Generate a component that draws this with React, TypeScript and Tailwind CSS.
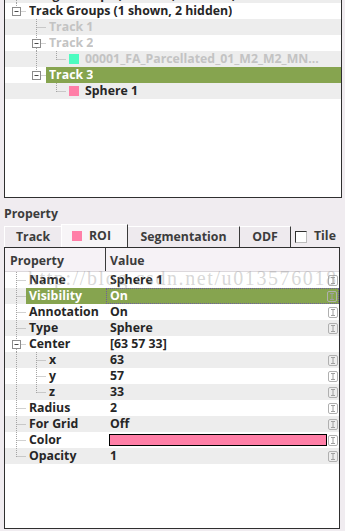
import React from 'react'

type TreeRow = {
  level: number
  text: string
  box?: boolean
  last?: boolean
  cont?: boolean[]
  tone: 'dark' | 'dim' | 'sel'
  swatch?: string
}

type PropRow = {
  name: string
  value?: string
  level?: number
  box?: boolean
  last?: boolean
  cont?: boolean[]
  sel?: boolean
  icon?: boolean
  color?: string
}

const treeRows: TreeRow[] = [
  { level: 0, text: 'Image Groups (0 shown, 0 hidden)', box: true, tone: 'dark' },
  { level: 0, text: 'Track Groups (1 shown, 2 hidden)', box: true, last: true, tone: 'dark' },
  { level: 1, text: 'Track 1', cont: [false], tone: 'dim' },
  { level: 1, text: 'Track 2', box: true, cont: [false], tone: 'dim' },
  { level: 2, text: '00001_FA_Parcellated_01_M2_M2_MN...', last: true, cont: [false, true], tone: 'dim', swatch: '#4dfcc0' },
  { level: 1, text: 'Track 3', box: true, last: true, cont: [false], tone: 'sel' },
  { level: 2, text: 'Sphere 1', last: true, cont: [false, false], tone: 'dark', swatch: '#ff7fa7' },
]

const propRows: PropRow[] = [
  { name: 'Name', value: 'Sphere 1', icon: true },
  { name: 'Visibility', value: 'On', sel: true, icon: true },
  { name: 'Annotation', value: 'On', icon: true },
  { name: 'Type', value: 'Sphere', icon: true },
  { name: 'Center', value: '[63 57 33]', box: true },
  { name: 'x', value: '63', level: 1, cont: [true], icon: true },
  { name: 'y', value: '57', level: 1, cont: [true], icon: true },
  { name: 'z', value: '33', level: 1, cont: [true], last: true, icon: true },
  { name: 'Radius', value: '2', icon: true },
  { name: 'For Grid', value: 'Off', icon: true },
  { name: 'Color', color: '#ff7fa7', icon: true },
  { name: 'Opacity', value: '1', last: true, icon: true },
]

// dotted branch lines + expander box, 16px high
function Gutter({ level, box, last, cont = [] }: { level: number; box?: boolean; last?: boolean; cont?: boolean[] }) {
  const w = 21 + 20 * level
  const bx = 11.5 + 20 * level
  const dot = { stroke: '#a3a3a3', strokeDasharray: '1 1' }
  return (
    <svg width={w} height={16} className="shrink-0">
      {cont.map((c, i) =>
        c ? <line key={i} x1={11.5 + 20 * i} y1={0} x2={11.5 + 20 * i} y2={16} {...dot} /> : null
      )}
      {box ? (
        <>
          <line x1={bx} y1={0} x2={bx} y2={4} {...dot} />
          {!last && <line x1={bx} y1={13} x2={bx} y2={16} {...dot} />}
          <line x1={bx + 5} y1={8.5} x2={w} y2={8.5} {...dot} />
          <rect x={bx - 4} y={4.5} width={8} height={8} fill="#fff" stroke="#8c8c8c" />
          <line x1={bx - 2} y1={8.5} x2={bx + 2} y2={8.5} stroke="#4a4a4a" />
        </>
      ) : (
        <>
          <line x1={bx} y1={0} x2={bx} y2={last ? 9 : 16} {...dot} />
          <line x1={bx + 1} y1={8.5} x2={w} y2={8.5} {...dot} />
        </>
      )}
    </svg>
  )
}

function EditIcon() {
  return (
    <svg width="10" height="11" viewBox="0 0 10 11" className="shrink-0">
      <rect x="0.5" y="0.5" width="9" height="10" rx="1.5" fill="none" stroke="#b0b0b0" />
      <path d="M3 2.5h4M5 2.5v6M3 8.5h4" stroke="#a0a0a0" fill="none" />
    </svg>
  )
}

export default function App() {
  return (
    <div className="relative h-[531px] w-[345px] overflow-hidden bg-[#f0ecf0] font-['Open_Sans',sans-serif] text-[12.3px] font-bold">
      {/* track tree */}
      <div className="ml-[4px] h-[198px] w-[338px] overflow-hidden border-x border-b border-[#2f2f2f] bg-white">
        {treeRows.map((r, i) => (
          <div
            key={i}
            className={`flex h-4 leading-4 ${i % 2 === 0 ? 'bg-[#ededed]' : 'bg-white'} ${i === 0 ? 'mt-[-13px]' : ''}`}
          >
            <Gutter level={r.level} box={r.box} last={r.last} cont={r.cont} />
            <div
              className={`flex min-w-0 flex-1 items-center pl-[3px] ${
                r.tone === 'sel' ? 'bg-[#86a44f] text-white' : r.tone === 'dim' ? 'text-[#c3c3c3]' : 'text-[#262626]'
              }`}
            >
              {r.swatch && (
                <span className="mr-[6px] h-[10px] w-[10px] shrink-0" style={{ backgroundColor: r.swatch }} />
              )}
              <span className="overflow-hidden whitespace-nowrap">{r.text}</span>
            </div>
          </div>
        ))}
      </div>

      <div className="ml-[4px] mt-[8px] h-4 leading-4 text-[#3c3c3c]">Property</div>

      {/* tabs */}
      <div className="ml-[4px] mt-[2px] flex h-[23px] items-end text-[#3c3c3c]">
        <div className="flex h-[21px] w-[57px] items-center justify-center border-l border-t border-white bg-[#eeeaee]">
          Track
        </div>
        <div className="flex h-[23px] w-[67px] items-center border-l border-t border-r border-white border-r-[#3a3a3a] bg-[#f7f5f7] pl-[10px]">
          <span className="h-[10px] w-[10px] bg-[#ff7fa7]" />
          <span className="ml-[7px]">ROI</span>
        </div>
        <div className="flex h-[21px] w-[112px] items-center justify-center border-r border-t border-white border-r-[#3a3a3a] bg-[#eeeaee]">
          Segmentation
        </div>
        <div className="flex h-[21px] w-[51px] items-center justify-center border-r border-t border-white border-r-[#3a3a3a] bg-[#eeeaee]">
          ODF
        </div>
        <div className="flex h-[21px] items-center">
          <span className="ml-[4px] h-[12px] w-[12px] border border-[#303030] border-b-[#bdbdbd] border-r-[#bdbdbd] bg-white" />
          <span className="ml-[7px]">Tile</span>
        </div>
      </div>

      {/* property table */}
      <div className="ml-[4px] h-[282px] w-[336px] border border-[#2f2f2f] bg-white text-[#262626]">
        <div className="flex h-[24px] border-b border-[#dcd8dc] bg-[#f6f2f6] text-[#3c3c3c]">
          <div className="flex w-[101px] items-center border-r border-[#3a3a3a] pl-[5px] pt-[3px]">Property</div>
          <div className="flex flex-1 items-center pl-[4px] pt-[3px]">Value</div>
        </div>
        {propRows.map((p, i) => (
          <div key={p.name} className={`flex h-4 leading-4 ${i % 2 === 1 ? 'bg-[#ededed]' : 'bg-white'}`}>
            <div className="flex w-[101px]">
              <Gutter level={p.level ?? 0} box={p.box} last={p.last} cont={p.cont} />
              <div className={`flex-1 whitespace-nowrap pl-[3px] ${p.sel ? 'bg-[#86a44f] text-white' : ''}`}>{p.name}</div>
            </div>
            <div
              className={`flex flex-1 items-center pr-[1px] ${
                p.sel ? 'border border-dotted border-[#6d5ca0] bg-[#86a44f] pl-[3px] text-white' : 'pl-[4px]'
              }`}
            >
              {p.color ? (
                <span className="ml-[-1px] h-[12px] w-[218px] border border-black bg-[#ff7fa7]" />
              ) : (
                <span>{p.value}</span>
              )}
              <span className="ml-auto">{p.icon && <EditIcon />}</span>
            </div>
          </div>
        ))}
      </div>

      <div className="pointer-events-none absolute left-[28px] top-[266px] whitespace-nowrap font-['Liberation_Serif',serif] text-[20px] font-normal leading-6 tracking-[1.6px] text-[#9a9a9a]/40">
        http://blog.csdn.net/u013576018
      </div>
    </div>
  )
}
